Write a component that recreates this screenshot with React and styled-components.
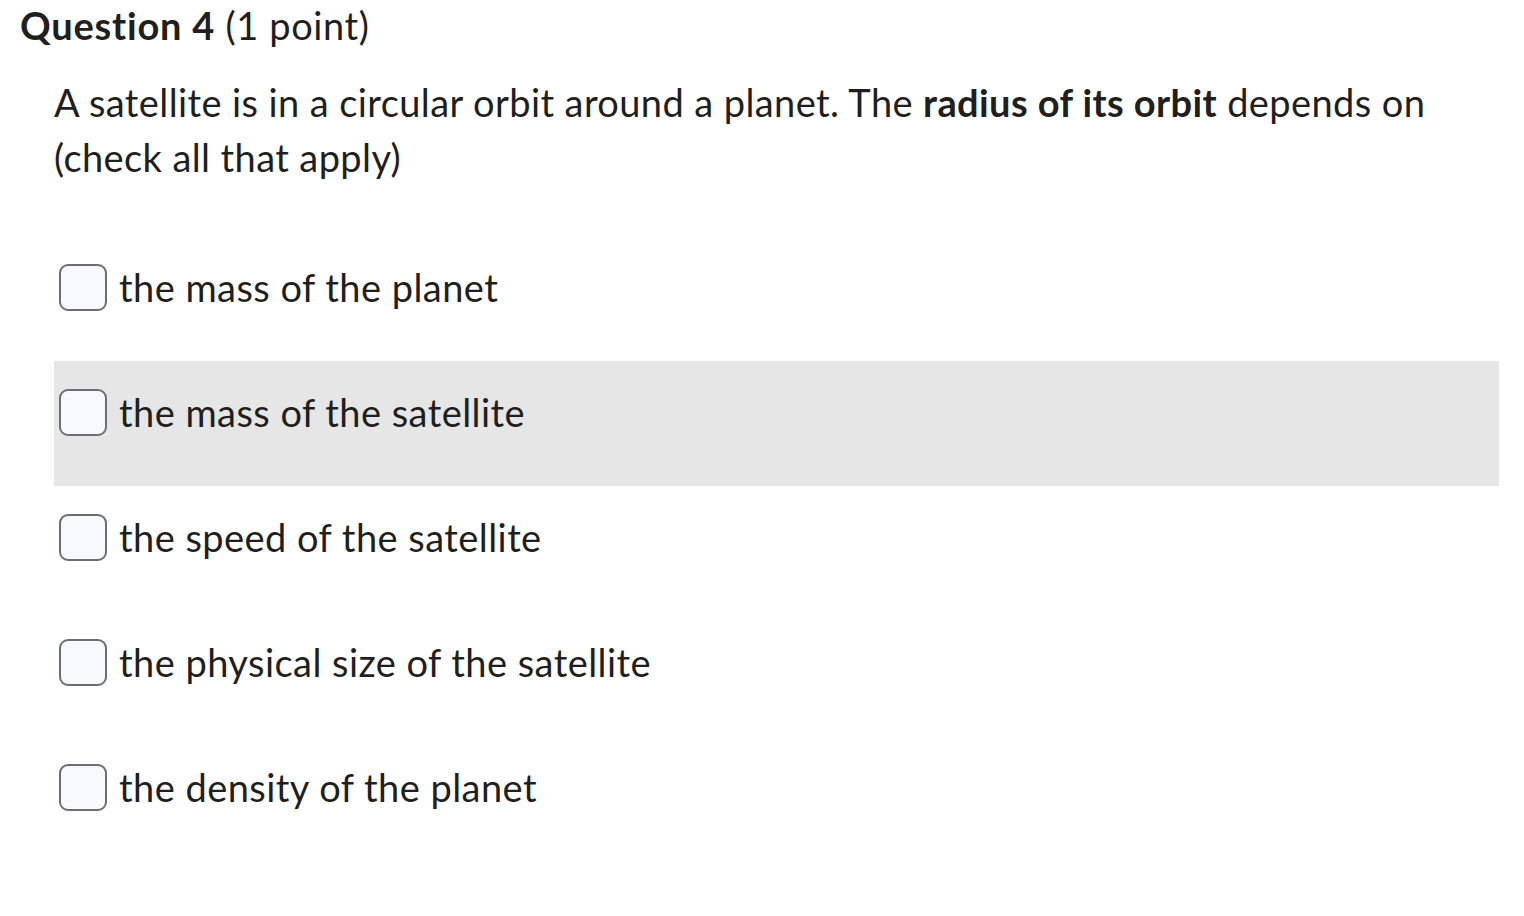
import React from 'react';
import styled, { createGlobalStyle } from 'styled-components';

const GlobalStyle = createGlobalStyle`
  body {
    margin: 0;
    background: #fff;
    font-family: Lato, "Open Sans", sans-serif;
    color: #1f1f20;
  }
`;

const options = [
  'the mass of the planet',
  'the mass of the satellite',
  'the speed of the satellite',
  'the physical size of the satellite',
  'the density of the planet',
];

const App = () => {
  return (
    <>
      <GlobalStyle />
      <Page>
        <Title>
          <strong>Question 4</strong> (1 point)
        </Title>
        <Body>
          <Prompt>
            A satellite is in a circular orbit around a planet. The <b>radius of its orbit</b> depends on
            (check all that apply)
          </Prompt>
          <OptionList>
            {options.map((text, i) => (
              <Option key={text} highlighted={i === 1}>
                <Box />
                <Label>{text}</Label>
              </Option>
            ))}
          </OptionList>
        </Body>
      </Page>
    </>
  );
};

export default App;

const Page = styled.div`
  padding: 1px 25px 0 20px;
`;

const Title = styled.h2`
  margin: 0;
  font-size: 38px;
  font-weight: 400;
  line-height: 48px;
  letter-spacing: 0.6px;
  strong {
    font-weight: 700;
    letter-spacing: 0.8px;
  }
`;

const Body = styled.div`
  padding-left: 34px;
`;

const Prompt = styled.p`
  margin: 26px 0 0;
  font-size: 38px;
  line-height: 55px;
  letter-spacing: 0.4px;
  b {
    font-weight: 700;
  }
`;

const OptionList = styled.div`
  display: flex;
  flex-direction: column;
  margin-top: 51px;
`;

const Option = styled.label`
  display: flex;
  align-items: center;
  gap: 12px;
  height: 125px;
  box-sizing: border-box;
  padding: 0 0 23px 5px;
  background-color: ${(props) => (props.highlighted ? '#e6e6e6' : 'transparent')};
  cursor: pointer;
`;

const Box = styled.span`
  width: 48px;
  height: 47px;
  box-sizing: border-box;
  flex-shrink: 0;
  border: 2px solid #6b6f73;
  border-radius: 9px;
  background: #f8f9fd;
`;

const Label = styled.span`
  font-size: 38px;
  line-height: 44px;
  letter-spacing: 0.45px;
`;
